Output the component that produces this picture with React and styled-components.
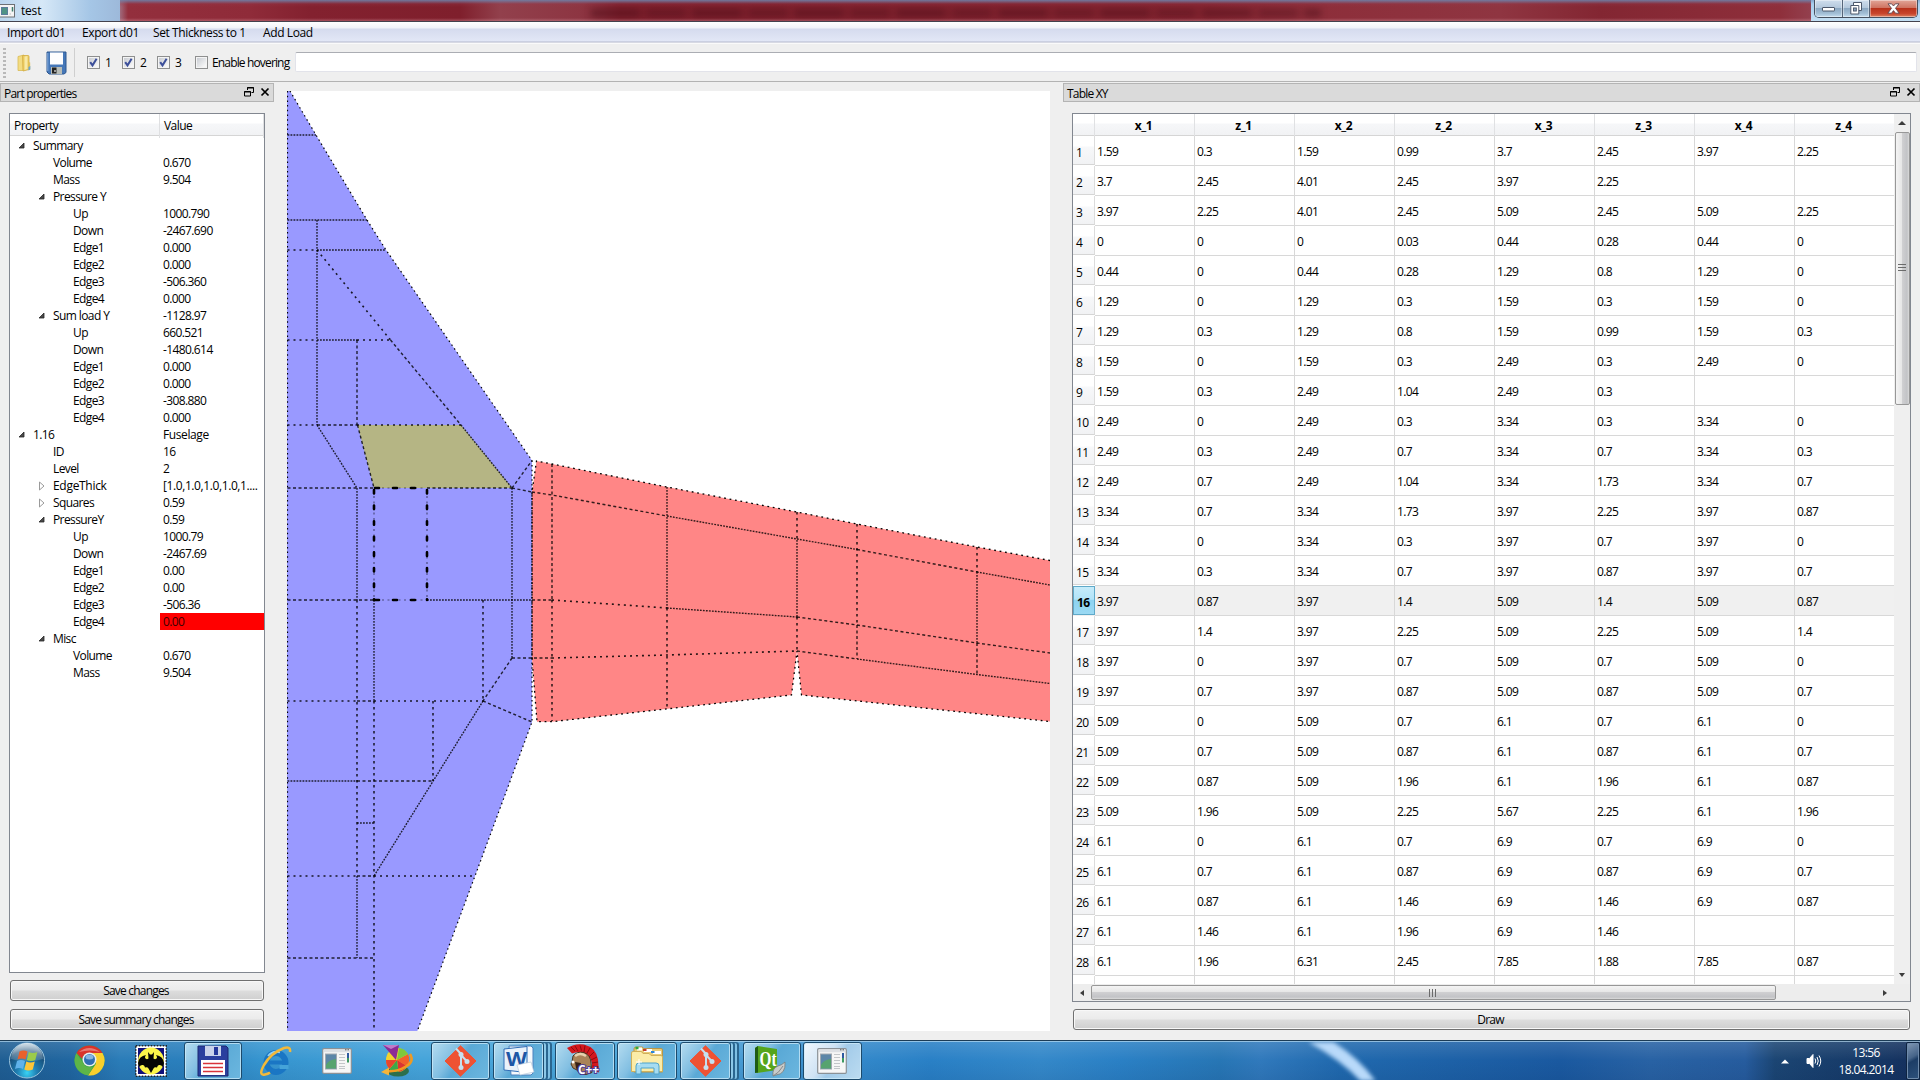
import React from "react";
import styled, { createGlobalStyle, css } from "styled-components";

const Global = createGlobalStyle`
  * { box-sizing: border-box; }
  html, body { margin: 0; padding: 0; overflow: hidden; }
  body { font-family: "Open Sans", "Noto Sans", sans-serif; font-size: 12px; letter-spacing: -0.6px; color: #000; background: #efefef; }
`;

const Window = styled.div`
  width: 1920px; height: 1080px; display: flex; flex-direction: column; background: #efefef; overflow: hidden;
  line-height: 17px; white-space: nowrap;
`;

/* ---------- title bar ---------- */
const TitleBar = styled.header`
  height: 22px; flex: none; display: flex; align-items: flex-start; overflow: hidden;
  background: linear-gradient(180deg, #86a9cf 0, #a9cdec 4px, #c3dff4 100%);
  border-bottom: 1px solid #44424e;
`;
const TitleLabel = styled.div`
  width: 120px; height: 21px; flex: none; display: flex; align-items: center; gap: 5px; letter-spacing: -0.2px;
  background: linear-gradient(90deg, #b9d5ee, #d6e8f7 35%, #a5c6e6 75%, #9db9da);
`;
const TitleGlass = styled.div`
  flex: 1; height: 21px; display: flex; align-items: center; justify-content: center;
  background:
    linear-gradient(180deg, rgba(110,130,170,.9) 0, rgba(150,60,80,.25) 4px, rgba(0,0,0,0) 7px, rgba(0,0,0,0) 18px, rgba(255,200,210,.28) 21px),
    linear-gradient(90deg, #a06a7c 0, #932f3d 8px, #8f2b39 130px, #83212f 190px, #7f1f2c 340px, #92404c 380px, #8d3542 460px, #7e1f2c 500px, #842430 1080px, #8d2e3a 1200px, #8f3541 1380px, #832632 1480px, #8e2f3b 1660px, #93404e 100%);
`;
const GlassBlur = styled.div`
  width: 730px; height: 8px; filter: blur(3px); margin-top: 4px; margin-right: 20px;
  background: repeating-linear-gradient(90deg, rgba(60,8,18,.38) 0 46px, rgba(60,8,18,.12) 50px 55px, rgba(60,8,18,.32) 58px 92px, rgba(60,8,18,.1) 96px 102px);
`;
const Controls = styled.div`
  width: 104px; height: 18px; margin: 0 2px 0 3px; flex: none; display: flex; overflow: hidden;
  border: 1px solid #46505f; border-top: 0; border-radius: 0 0 5px 5px;
`;
const ControlButton = styled.div`
  width: ${(p) => p.$w}px; display: flex; align-items: center; justify-content: center;
  border-right: ${(p) => (p.$close ? 0 : "1px solid #56667a")};
  box-shadow: inset 0 0 0 1px rgba(255,255,255,.4);
  background: ${(p) =>
    p.$close
      ? "linear-gradient(180deg, #e2a698 0, #cf7462 45%, #b8321b 50%, #c8452c 80%, #dc8262 100%)"
      : "linear-gradient(180deg, #cfdeed 0, #b4c8dc 45%, #8ca8c2 50%, #a3bfd6 80%, #c6def0 100%)"};
`;

/* ---------- menu and tool bars ---------- */
const MenuBar = styled.nav`
  height: 22px; flex: none; display: flex; padding-left: 7px; line-height: 22px; letter-spacing: -0.4px;
  background: linear-gradient(180deg, #ffffff 0, #f1f3f9 6px, #d5dbee 7px, #e2e7f6 19px, #b4b8cc 20px, #fafafa 21px);
`;
const MenuItem = styled.span`width: ${(p) => p.$w}px; flex: none;`;
const ToolBar = styled.div`
  height: 38px; flex: none; display: flex; align-items: center; padding: 0 3px 0 3px;
  border-bottom: 1px solid #b3b3b3; background: #efefef;
`;
const Grip = styled.div`
  width: 3px; height: 30px; margin-right: 11px;
  background: repeating-linear-gradient(180deg, #b9b9b9 0 2px, transparent 2px 4px);
`;
const ToolIcon = styled.div`width: ${(p) => p.$w}px; display: flex; margin-right: ${(p) => p.$gap}px;`;
const Separator = styled.div`width: 1px; height: 29px; background: #cfcfcf; margin-right: 12px;`;
const Check = styled.label`
  display: flex; align-items: center; width: ${(p) => p.$w}px; gap: ${(p) => p.$gap || 5}px; letter-spacing: -0.85px; line-height: 18px;
`;
const Box = styled.span`
  width: 13px; height: 13px; border: 1px solid #8e8f8f; display: flex; flex: none;
  background: linear-gradient(135deg, #c3c7ce, #f6f6f6 80%); box-shadow: inset 0 0 0 1px #f4f4f4;
`;
const Address = styled.div`
  flex: 1; height: 20px; margin-top: -1px; background: #fff; border: 1px solid #e2e3ea; border-top-color: #abadb3; border-radius: 2px;
`;

/* ---------- body ---------- */
const Body = styled.main`height: 958px; flex: none; display: flex; padding-top: 1px;`;
const Dock = styled.section`width: ${(p) => p.$w}px; flex: none; display: flex; flex-direction: column;`;
const DockTitle = styled.div`
  height: 19px; flex: none; display: flex; align-items: center; padding: 0 3px 0 3px;
  background: #dadada; border: 1px solid #b4b4b4;
`;
const DockName = styled.span`flex: 1; padding-top: 2px; letter-spacing: -0.8px;`;
const DockTools = styled.span`display: flex; gap: 6px; padding-bottom: 1px;`;
const Frame = styled.div`
  display: flex; flex-direction: column; background: #fff; border: 1px solid #828790; overflow: hidden;
  margin: 11px ${(p) => p.$r}px 0 9px; height: ${(p) => p.$h}px; flex: none;
`;
const PushButton = styled.div`
  height: 21px; flex: none; margin: ${(p) => p.$top}px 10px 0 10px; padding-right: ${(p) => p.$shift || 0}px;
  border: 1px solid #707070; border-radius: 3px; text-align: center; line-height: 20px; letter-spacing: -0.8px;
  box-shadow: inset 0 0 0 1px #f8f8f8;
  background: linear-gradient(180deg, #f2f2f2 0, #ebebeb 48%, #dddddd 52%, #cfcfcf 100%);
`;
const Canvas = styled.div`width: 763px; height: 940px; margin: 8px 13px 0 13px; flex: none; background: #fff; display: flex;`;

/* ---------- property tree ---------- */
const headFill = css`background: linear-gradient(180deg, #fff 0, #fff 9px, #f6f7f9 10px, #f1f2f4 100%);`;
const TreeHead = styled.div`
  display: grid; grid-template-columns: 150px 1fr; height: 22px; line-height: 24px; border-bottom: 1px solid #d5d5d5; margin-bottom: 1px; flex: none;
  letter-spacing: -0.55px;
  ${headFill}
`;
const TreeHeadCell = styled.div`padding-left: 4px; border-right: 1px solid #dfe0e2;`;
const TreeRow = styled.div`display: grid; grid-template-columns: 150px 1fr; height: 17px;`;
const TreeName = styled.div`
  display: flex; align-items: center; padding-left: ${(p) => 8 + p.$level * 20}px;
  letter-spacing: ${(p) => (p.$tight ? -0.3 : -0.6)}px;
`;
const Twist = styled.span`width: 15px; display: flex; flex: none;`;
const TreeValue = styled.div`padding-left: 3px; letter-spacing: ${(p) => (p.$wide ? -0.4 : -0.6)}px; background: ${(p) => (p.$alert ? "#ff0000" : "transparent")}; color: ${(p) => (p.$alert ? "#400000" : "#000")};`;

/* ---------- data table ---------- */
const TableTop = styled.div`display: flex; flex: 1; min-height: 0;`;
const Sheet = styled.div`flex: 1; overflow: hidden;`;
const cols = css`display: grid; grid-template-columns: 22px repeat(7, 100px) 99px;`;
const HeadRow = styled.div`${cols} height: 22px; border-bottom: 1px solid #d5d5d5; ${headFill}`;
const HeadCell = styled.div`
  border-right: 1px solid #e0e1e3; font-weight: 700; text-align: center; line-height: 24px; letter-spacing: -0.4px; padding-right: 2px;
  &:last-child { border-right: 0; }
`;
const Row = styled.div`
  ${cols} height: 30px; background: ${(p) => (p.$active ? "#f0f0f0" : "#fff")};
`;
const RowHead = styled.div`
  padding-left: 3px; line-height: 33px; border-right: 1px solid #dcdcdc; border-bottom: 1px solid #d5d5d5; margin-bottom: 1px; height: 29px;
  background: linear-gradient(180deg, #fff 0, #fff 10px, #f7f8fa 11px, #f1f2f4 100%);
  ${(p) => p.$active && css`
    font-weight: 700; border: 1px solid #5fa9c9; padding-left: 3px; line-height: 31px;
    background: linear-gradient(180deg, #c6ebfa 0, #b2e3f8 45%, #8dd3f1 50%, #9bd9f3 100%);
  `}
`;
const Cell = styled.div`
  height: 30px; padding-left: 2px; line-height: 31px; border-right: 1px solid #d8d8d8; border-bottom: 1px solid #d8d8d8;
  &:last-child { border-right: 0; }
`;
const VBar = styled.div`
  width: 16px; display: flex; flex-direction: column; align-items: center; background: #efefef; flex: none; padding-bottom: 5px;
`;
const HBar = styled.div`height: 17px; flex: none; display: flex; align-items: center; background: #ededed; padding-right: 16px; `;
const Arrow = styled.span`display: flex; align-items: center; justify-content: center; width: ${(p) => p.$w}px; height: ${(p) => p.$h}px; flex: none;`;
const Spring = styled.span`flex: 1;`;
const VThumb = styled.div`
  width: 15px; height: 273px; border: 1px solid #979797; border-radius: 2px; display: flex; align-items: center; justify-content: center;
  background: linear-gradient(90deg, #f4f4f4 0, #e6e6e6 45%, #cfcfd1 50%, #c2c3c6 85%, #dadada 100%);
`;
const HThumb = styled.div`
  height: 15px; width: 685px; border: 1px solid #979797; border-radius: 2px; display: flex; align-items: center; justify-content: center;
  background: linear-gradient(180deg, #f4f4f4 0, #e6e6e6 45%, #cfcfd1 50%, #c2c3c6 85%, #dadada 100%);
`;

/* ---------- task bar ---------- */
const TaskBar = styled.footer`
  height: 40px; flex: none; display: flex; align-items: center; overflow: hidden; padding-top: 1px;
  border-top: 1px solid #1c3c56; box-shadow: inset 0 1px 0 rgba(190,225,245,.65);
  background:
    linear-gradient(180deg, rgba(255,255,255,.12), rgba(255,255,255,0) 50%, rgba(0,20,60,.08)),
    linear-gradient(90deg, #1f5e93 0, #2066a0 70px, #2a7cb8 120px, #2a80be 200px, #3594cf 260px, #45a4da 420px, #4ba6da 640px, #4599d3 760px, #3288ca 860px, #2980c6 930px, #3488c9 1040px, #2a80c5 1120px, #2776b5 1220px, #3079bc 1260px, #2069ae 1340px, #1a59a0 1560px, #2862a4 1650px, #265c9e 1745px, #1b4573 1775px, #163a68 1860px, #142f5c 100%);
`;
const Slot = styled.div`
  width: ${(p) => p.$w}px; height: 38px; flex: none; display: flex; align-items: center; justify-content: center;
  padding: 0 ${(p) => p.$shift || 0}px 1px 0;
`;
const TaskButton = styled(Slot)`
  margin-right: ${(p) => p.$gap}px; border: 1px solid #1c4a6c; border-radius: 3px;
  box-shadow: inset 0 0 0 1px rgba(205,235,250,.75), ${(p) => (p.$stack ? "3px 0 0 -1px #8cc8e8, 4px 0 0 0 #2a6690, 7px 0 0 -1px #7fc0e4, 8px 0 0 0 #2a6690" : "0 0 0 0 transparent")};
  background: ${(p) =>
    p.$active
      ? "linear-gradient(125deg, #f2f8fd 0, #cfe3f4 40%, #a3cbe9 55%, #bcdcf1 100%)"
      : "linear-gradient(125deg, #b5dcf0 0, #82bfe2 35%, #5aa9d6 50%, #6cb7df 100%)"};
`;
const Streak = styled.svg`width: 110px; height: 39px; margin-left: 431px; flex: none; filter: blur(2px);`;
const Tray = styled.div`margin-left: auto; display: flex; align-items: center; height: 38px; color: #fff;`;
const TrayIcon = styled.span`display: flex; margin-right: ${(p) => p.$gap}px;`;
const Clock = styled.div`width: 62px; text-align: center; line-height: 17px; padding-right: 2px; margin-right: 8px;`;
const ShowDesktop = styled.div`
  width: 14px; height: 38px; border: 1px solid #0d2340; border-radius: 2px; box-shadow: inset 0 0 0 1px #6f8bab;
  background: linear-gradient(150deg, #8299b5 0, #466489 40%, #1c3d66 50%, #2e527c 100%);
`;

/* ---------- data ---------- */
const tree = [
  [0, "o", "Summary", ""], [1, "", "Volume", "0.670"], [1, "", "Mass", "9.504"], [1, "o", "Pressure Y", ""],
  [2, "", "Up", "1000.790"], [2, "", "Down", "-2467.690"], [2, "", "Edge1", "0.000"], [2, "", "Edge2", "0.000"],
  [2, "", "Edge3", "-506.360"], [2, "", "Edge4", "0.000"], [1, "o", "Sum load Y", "-1128.97"], [2, "", "Up", "660.521"],
  [2, "", "Down", "-1480.614"], [2, "", "Edge1", "0.000"], [2, "", "Edge2", "0.000"], [2, "", "Edge3", "-308.880"],
  [2, "", "Edge4", "0.000"], [0, "o", "1.16", "Fuselage"], [1, "", "ID", "16"], [1, "", "Level", "2"],
  [1, "c", "EdgeThick", "[1.0,1.0,1.0,1.0,1...."], [1, "c", "Squares", "0.59"], [1, "o", "PressureY", "0.59"],
  [2, "", "Up", "1000.79"], [2, "", "Down", "-2467.69"], [2, "", "Edge1", "0.00"], [2, "", "Edge2", "0.00"],
  [2, "", "Edge3", "-506.36"], [2, "", "Edge4", "0.00", true], [1, "o", "Misc", ""], [2, "", "Volume", "0.670"], [2, "", "Mass", "9.504"],
];
const heads = ["x_1", "z_1", "x_2", "z_2", "x_3", "z_3", "x_4", "z_4"];
const rows = `1.59 0.3 1.59 0.99 3.7 2.45 3.97 2.25
3.7 2.45 4.01 2.45 3.97 2.25 - -
3.97 2.25 4.01 2.45 5.09 2.45 5.09 2.25
0 0 0 0.03 0.44 0.28 0.44 0
0.44 0 0.44 0.28 1.29 0.8 1.29 0
1.29 0 1.29 0.3 1.59 0.3 1.59 0
1.29 0.3 1.29 0.8 1.59 0.99 1.59 0.3
1.59 0 1.59 0.3 2.49 0.3 2.49 0
1.59 0.3 2.49 1.04 2.49 0.3 - -
2.49 0 2.49 0.3 3.34 0.3 3.34 0
2.49 0.3 2.49 0.7 3.34 0.7 3.34 0.3
2.49 0.7 2.49 1.04 3.34 1.73 3.34 0.7
3.34 0.7 3.34 1.73 3.97 2.25 3.97 0.87
3.34 0 3.34 0.3 3.97 0.7 3.97 0
3.34 0.3 3.34 0.7 3.97 0.87 3.97 0.7
3.97 0.87 3.97 1.4 5.09 1.4 5.09 0.87
3.97 1.4 3.97 2.25 5.09 2.25 5.09 1.4
3.97 0 3.97 0.7 5.09 0.7 5.09 0
3.97 0.7 3.97 0.87 5.09 0.87 5.09 0.7
5.09 0 5.09 0.7 6.1 0.7 6.1 0
5.09 0.7 5.09 0.87 6.1 0.87 6.1 0.7
5.09 0.87 5.09 1.96 6.1 1.96 6.1 0.87
5.09 1.96 5.09 2.25 5.67 2.25 6.1 1.96
6.1 0 6.1 0.7 6.9 0.7 6.9 0
6.1 0.7 6.1 0.87 6.9 0.87 6.9 0.7
6.1 0.87 6.1 1.46 6.9 1.46 6.9 0.87
6.1 1.46 6.1 1.96 6.9 1.46 - -
6.1 1.96 6.31 2.45 7.85 1.88 7.85 0.87`
  .split("\n")
  .map((l) => l.split(" ").map((v) => (v === "-" ? "" : v)));

/* panel edges by dash density: s = sparse, v = sparse upright, m = medium, d = dense */
const edges = [
  ["d", "287.5,135 316,135"], ["d", "287.5,220 367,220"], ["s", "287.5,250 317,250"], ["d", "317,250 386,250"],
  ["s", "287.5,340 317,340"], ["d", "317,340 357,340"], ["s", "357,340 390,340"],
  ["s", "287.5,425 317,425"], ["m", "317,425 357,425"], ["s", "357,425 461,425"],
  ["m", "287.5,488 374,488"], ["m", "427,488 512,488"], ["m", "287.5,600 374,600"], ["d", "427,600 532,600"], ["m", "532,600 552,600"],
  ["m", "512,658 552,658"], ["s", "287.5,701 357,701"], ["m", "357,701 374,701"], ["s", "374,701 483,701"],
  ["d", "287.5,781 357,781"], ["m", "357,781 433,781"], ["d", "357,823 374,823"],
  ["s", "287.5,876 357,876"], ["m", "357,876 374,876"], ["s", "374,876 475,876"], ["m", "287.5,958 374,958"],
  ["d", "317,220 317,425"], ["m", "357,340 357,425"], ["d", "357,488 357,600"], ["v", "357,600 357,876"], ["d", "357,876 357,958"],
  ["d", "374,600 374,701"], ["v", "374,701 374,1031"], ["v", "483,600 483,701"], ["v", "433,701 433,781"],
  ["d", "512,488 512,658"], ["s", "317,250 390.5,340"], ["m", "390.5,340 461,425"], ["d", "461,425 512,488"],
  ["d", "317,425 357,488"], ["m", "357.5,425 374,488"], ["m", "512,488 532,460.5"], ["m", "512,488 532,492"],
  ["m", "512,658 483,701"], ["d", "483,701 374,876"], ["m", "483,701 532,722"],
  ["d", "532,492 532,658"],
  ["m", "532,492 552,495 667,516"], ["d", "667,516 797,539 857,549.5"], ["m", "857,549.5 977,572"], ["d", "977,572 1050,585"],
  ["s", "552,600 667,608"], ["d", "667,608 797,617"], ["m", "797,617 857,625 977,643 1050,653"],
  ["s", "552,658 667,655 797,651"], ["m", "797,651 857,659"], ["d", "857,659 977,674.5 1050,683.5"],
  ["m", "552,464 552,600"], ["v", "552,600 552,721"], ["d", "667,487 667,608"], ["v", "667,608 667,708"],
  ["v", "797,512 797,540"], ["d", "797,540 797,617"], ["v", "797,617 797,651"], ["v", "857,524 857,625"], ["m", "857,625 857,659"],
  ["v", "977,547 977,572"], ["d", "977,572 977,643"], ["m", "977,643 977,674"],
];
const dash = { s: "2 4", v: "2.5 3.5", m: "3 2.5", d: "1.8 1.2" };
const weight = { s: 1.6, v: 1.6, m: 1.4, d: 1.4 };
const ink = { s: 0.85, v: 0.8, m: 0.8, d: 0.8 };
const outline = "M287.5,91 V1031 M290,91 L316,135 L367,220 L386,250 L532,460.5 V722 L475,876 L417.3,1031";
const wing = "536.5,461 552,464 667,487 797,512 857,524 977,547 1050,560.5 1050,721.5 801.5,695 797,651 791.5,695 552,721.7 537,721.7 532,658 532,492";

function Mesh() {
  return (
    <svg width="763" height="940" viewBox="287 91 763 940">
      <path d="M287,91 H290 L316,135 L367,220 L386,250 L532,460.5 V722 L475,876 L417.3,1031 H287Z" fill="#9999ff" />
      <polygon points={wing} fill="#ff8686" />
      <polygon points="357.5,425 461,425 512,488 374,488" fill="#b5b584" />
      <g fill="none" stroke="#000">
        <path d={outline} strokeWidth="1.2" strokeDasharray="1.5 3.2" />
        <polyline points={"1050,560.5 977,547 857,524 797,512 667,487 552,464 536.5,461 532,492"} strokeWidth="1.3" strokeDasharray="1.8 3.7" />
        <polyline points={"532,658 537,721.7 552,721.7 791.5,695 797,651 801.5,695 1050,721.5"} strokeWidth="1.3" strokeDasharray="1.8 3.7" />
        {edges.map(([k, pts], i) => (
          <polyline key={i} points={pts} strokeWidth={weight[k]} strokeOpacity={ink[k]} strokeDasharray={dash[k]} />
        ))}
        <g strokeWidth="2.6" strokeLinecap="round">
          <path d="M374,490 V600 M427,490 V600" strokeDasharray="3.5 12.1" />
          <path d="M375,488 H424 M375,600 H424" strokeDasharray="4 14" />
        </g>
        <path d="M374,496 V600 M427,496 V600 M382,488 H424 M382,600 H424" strokeWidth="1.2" strokeOpacity=".5" strokeDasharray="2 3.5" />
      </g>
    </svg>
  );
}

/* ---------- small drawings ---------- */
const FloatClose = () => (
  <DockTools>
    <svg width="10" height="10" viewBox="0 0 10 10" fill="none" stroke="#000">
      <path d="M3.500 3V.5h6v5H7.500M3 1h7M.5 4.500h6v4.500h-6zM0 5h7" />
    </svg>
    <svg width="10" height="10" viewBox="0 0 10 10" stroke="#000" strokeWidth="1.7"><path d="M1.500 1.500l7 7M8.500 1.500l-7 7" /></svg>
  </DockTools>
);
const Tick = () => (
  <svg width="11" height="11" viewBox="0 0 11 11" fill="none" stroke="#3c4f9a" strokeWidth="2"><path d="M2.200 5.200l2.300 3.200L8.600 1.800" /></svg>
);
const AppWindow = ({ w = 30, h = 26 }) => (
  <svg width={w} height={h} viewBox="0 0 30 26">
    <rect x=".7" y=".7" width="28.6" height="24.6" rx="1" fill="#f6f6f6" stroke="#8b9196" strokeWidth="1.2" />
    <path d="M2 3h26" stroke="#dde0e4" strokeWidth="2.4" /><path d="M23 1.800h1.500M25.500 1.800H27" stroke="#555" />
    <rect x="3.500" y="6" width="11" height="15" fill="#5c86a8" stroke="#a0a8b0" /><path d="M4 17q2-5 10-6v9.500H4z" fill="#57a36f" />
    <path d="M17 6.500h6M17 9.500h6M17 12.500h6M17 15.500h6M17 18.500h6M17 20.500h6" stroke="#c3c6c9" />
    <path d="M26 5v5" stroke="#2e5aa0" strokeWidth="2" /><path d="M26 10v4.500" stroke="#3e9a62" strokeWidth="2" />
  </svg>
);
const TitleIcon = () => (
  <svg width="16" height="14" viewBox="0 0 16 14">
    <rect x="-1" y=".5" width="15.500" height="12.500" fill="#f4f4f4" stroke="#6c7075" /><rect x="1.500" y="3.500" width="6" height="7" fill="#4f9385" stroke="#5a7d9c" />
    <path d="M9.500 10h1.500" stroke="#bbb" /><path d="M12.500 3v4.500" stroke="#3d7d6c" strokeWidth="1.500" />
  </svg>
);
const Folder = () => (
  <svg width="15" height="18" viewBox="0 0 15 18">
    <path d="M1 2.500l6-1.500v15.500H1z" fill="#f3dc82" stroke="#d9bb55" strokeWidth=".8" />
    <path d="M5.500 1.500H11q1 0 1 1v13l-6 1.500z" fill="#eccb5e" stroke="#d3ad45" strokeWidth=".8" /><path d="M7.500 2.500l3-.5v13l-3 1z" fill="#f8e9a6" />
    <path d="M12.200 8l1 .5v7l-1.500.5z" fill="#e0c05c" /><path d="M11.500 13l1.800-1v3.500l-1.800 1z" fill="#6aa6cf" />
  </svg>
);
const Disk = () => (
  <svg width="21" height="24" viewBox="0 0 21 24">
    <path d="M1 1h19v20.500l-2 1.500H3l-2-2z" fill="#4577b8" stroke="#2f5890" /><rect x="4" y="1.500" width="13" height="12" fill="#fdfdfe" />
    <path d="M1.800 2v18" stroke="#86aede" /><rect x="5" y="16" width="11" height="7" fill="#b8bdb8" /><rect x="6" y="16.500" width="4.500" height="6" fill="#222" /><rect x="8" y="19" width="2" height="2" fill="#999" />
  </svg>
);
const StartOrb = () => (
  <svg width="38" height="37" viewBox="0 0 38 37">
    <defs>
      <radialGradient id="orb" cx=".5" cy=".85" r=".8"><stop offset="0" stopColor="#38d3f5" /><stop offset=".35" stopColor="#1f7fb3" /><stop offset=".8" stopColor="#174a74" /><stop offset="1" stopColor="#5f8aa8" /></radialGradient>
      <linearGradient id="gl" x2="0" y2="1"><stop stopColor="#fff" stopOpacity=".7" /><stop offset="1" stopColor="#fff" stopOpacity=".1" /></linearGradient>
    </defs>
    <circle cx="19" cy="18.500" r="17.500" fill="url(#orb)" stroke="#9cc5dd" strokeWidth="1" />
    <path d="M3 17a16 16 0 0 1 32 0q-16 5-32 0z" fill="url(#gl)" />
    <path d="M11.500 9.500q4-2 8 0l-2 8q-4-2-8 0z" fill="#e9602c" /><path d="M20.800 10q4 2 8.500 0l-2 8q-4.500 2-8.500 0z" fill="#9bcb4a" />
    <path d="M9 19q4-2 8 0l-2 8q-4-2-8 0z" fill="#5fb2ea" /><path d="M18.300 19.500q4 2 8.500 0l-2 8q-4.500 2-8.500 0z" fill="#fbc638" />
  </svg>
);
const Chrome = () => (
  <svg width="31" height="31" viewBox="0 0 31 31">
    <circle cx="15.500" cy="15.500" r="15" fill="#3aa346" /><path d="M2.500 8A15 15 0 0 1 28.500 8H15.500a7.500 7.500 0 0 0-7.300 6z" fill="#d8332a" />
    <path d="M28.500 8A15 15 0 0 1 14 30.400l7.500-11q2-6-3-11.400z" fill="#f8cf2c" /><path d="M2.500 8a15 15 0 0 0 11.500 22.400l5-8.500q-7 1.500-10-4z" fill="#5db548" />
    <circle cx="15.500" cy="14.500" r="7" fill="#e9eef0" /><circle cx="15.500" cy="14.500" r="5.500" fill="#2f6fb4" /><ellipse cx="15.500" cy="12" rx="4" ry="2.500" fill="#86b4e0" />
    <path d="M5 7q10-8 21 0-10-3-21 0z" fill="#fff" opacity=".35" />
  </svg>
);
const Bat = () => (
  <svg width="32" height="32" viewBox="0 0 32 32">
    <rect x="1" y="1" width="30" height="30" fill="#fff" /><rect x=".75" y=".75" width="30.500" height="30.500" fill="none" stroke="#222" strokeWidth="1.500" strokeDasharray="1.500 1.500" /><rect x="3" y="3" width="26" height="26" fill="#10107a" />
    <ellipse cx="16" cy="16" rx="13" ry="13.500" fill="#fbf54a" />
    <path d="M13 7L15 9.500h2L19 7l-.5 6.500Q20.500 15 22 13q0-2-1-3 7 1 8 8 0 2-1.500 4-1-2.500-3.500-2 -1.500 0-2 2.500-2.500-1-3.500 1L16 28l-2.500-4.500q-1-2-3.500-1-.5-2.500-2-2.500-2.500-.5-3.500 2Q3 20 3 18q1-7 8-8-1 1-1 3 1.500 2 3.500.5z" fill="#050505" />
  </svg>
);
const Floppy = () => (
  <svg width="32" height="32" viewBox="0 0 32 32">
    <path d="M1 1h28l2 2v28H1z" fill="#2a3f9e" stroke="#1a2870" /><rect x="8" y="1" width="16" height="10" fill="#c9d3ea" /><rect x="17" y="2" width="4" height="8" fill="#24389a" />
    <rect x="4" y="15" width="24" height="15" fill="#fff" /><path d="M6 18.500h20M6 22.500h20M6 26.500h20" stroke="#d8343a" strokeWidth="1.400" />
  </svg>
);
const Explorer = () => (
  <svg width="33" height="32" viewBox="0 0 33 32">
    <circle cx="17" cy="17.500" r="9.500" fill="none" stroke="#1a76c4" strokeWidth="6" /><path d="M9 17.500h18" stroke="#1a76c4" strokeWidth="4" /><path d="M20.500 20h9v4h-9z" fill="#45a3d9" />
    <path d="M9 11q5-6 12-3.500" stroke="#8fd0f5" strokeWidth="1.800" fill="none" />
    <path d="M31 7q1-6-6-4Q12 8 5 20-1 31 6 29.500 9 29 11 27.500" fill="none" stroke="#f2b93a" strokeWidth="2.500" />
  </svg>
);
const Pinwheel = () => (
  <svg width="33" height="32" viewBox="0 0 33 32">
    <ellipse cx="17" cy="26" rx="11" ry="5.500" fill="#2c6f4c" />
    <ellipse cx="16.500" cy="15" rx="11.500" ry="12" fill="#f2d22e" /><path d="M16 15L27 9a12 12 0 0 1-1 12z" fill="#f0602c" /><path d="M16 15l10 6a12 12 0 0 1-8.500 6z" fill="#d93434" /><path d="M16 15l1.500 12a12 12 0 0 1-9-3z" fill="#3aa84a" /><path d="M16 15l-7.500 9a12 12 0 0 1-3.500-9z" fill="#e8452e" />
    <path d="M16 15l2-12a12 12 0 0 1 9 6z" fill="#7ec83c" /><path d="M2 0h16l-3 15z" fill="#8b2a96" /><path d="M2 0h16l-8 4z" fill="#c07bc8" />
    <path d="M29 9q5 8-5 13-8 5-18 4" fill="none" stroke="#f09a22" strokeWidth="2.500" /><path d="M0 27l8-4.500v8z" fill="#f4b53a" />
  </svg>
);
const Git = () => (
  <svg width="33" height="32" viewBox="0 0 33 32">
    <path d="M16.500.8L32 16 16.500 31.200 1 16z" fill="#ee5233" strokeLinejoin="round" stroke="#ee5233" />
    <path d="M12 3.500l5 5.500v13M17 10l6 6.500" fill="none" stroke="#c5e0ef" strokeWidth="2" /><circle cx="17" cy="9.500" r="2.500" fill="#c5e0ef" /><circle cx="23" cy="16.500" r="2.500" fill="#c5e0ef" /><circle cx="17" cy="22.500" r="2.500" fill="#c5e0ef" />
  </svg>
);
const IconText = styled.text`
  font-family: ${(p) => (p.$serif ? '"Liberation Serif", serif' : '"Open Sans", sans-serif')}; font-weight: 700; font-size: ${(p) => p.$s}px;
  letter-spacing: 0;
`;
const Word = () => (
  <svg width="32" height="31" viewBox="0 0 32 31">
    <path d="M6 1h22l2 2v25l-2 2H8z" fill="#f5f8fc" stroke="#4d82bf" /><path d="M1 4L24 1.500v26L1 25z" fill="#e9f1fa" stroke="#2e6cb5" />
    <IconText x="3" y="21" $s={20} fill="#1d56a5" textLength="21" lengthAdjust="spacingAndGlyphs">W</IconText>
    <path d="M14 20l14-3 3 10-14 3z" fill="#fff" stroke="#b8c8da" strokeWidth=".7" />
  </svg>
);
/* plume drawn as a fan of feathers round the back of the helmet */
const Trojan = () => (
  <svg width="38" height="36" viewBox="0 0 38 36">
    <path d="M1 5Q9 0 18 1.500q12 3 14 15l1 13-7-3q1-11-5-15-6-4-15-1z" fill="#d3171d" />
    <path d="M5 4l4 4M9 3l3 5M14 2.500l1.500 5M19 2.500l-1 6.500M24 5l-3.500 6M28 9l-5 5M31 14l-6 3M32 19l-6 1M32.500 24l-6-1" stroke="#8a0a10" />
    <path d="M7 13q4-5 11-3.500 7 3 7 11l1 9q-6 3-12 2L11 27l-4-2-2-4 1-2z" fill="#a98359" stroke="#4c3321" /><path d="M9 13q5-4 11 0" stroke="#e6d2b0" strokeWidth="2.500" fill="none" /><path d="M9 19l6 1-1 5-1 5-3-5z" fill="#372015" /><circle cx="7" cy="19" r="1.500" fill="#fff" />
    <IconText x="12" y="31" $s={12} fill="#fff" stroke="#4b3c9a" strokeWidth="2" paintOrder="stroke" textLength="21" lengthAdjust="spacingAndGlyphs">C++</IconText>
  </svg>
);
const Files = () => (
  <svg width="34" height="32" viewBox="0 0 34 32">
    <path d="M4 4q0-2 2-2h6q1 0 1.500 1.500H31q1.500 0 1.500 1.500v22H4z" fill="#e8cd78" stroke="#b6954a" /><path d="M7 2.500h5v3H7zM14 4h8v3h-8zM23 6h8v3h-8z" fill="#fff" />
    <path d="M5.500 3h3" stroke="#2faa3c" strokeWidth="2.500" /><path d="M13 5h3.500" stroke="#c63b2c" strokeWidth="2" /><path d="M21 7h3.500" stroke="#2b86d8" strokeWidth="2" />
    <path d="M1.500 8q0-1.500 1.500-1.500h8q1 0 2 2h6l2 2H31q1.500 0 1.500 1.500v14.500h-31z" fill="#fbeca8" stroke="#d0b05a" />
    <path d="M6 29V21q0-3 3-3h17q3 0 3 3v8h-5v-6H11v6z" fill="#a5dcf2" stroke="#4ea3cb" /><path d="M9 14v6M6 17h6" stroke="#fff" />
  </svg>
);
const QtLogo = () => (
  <svg width="32" height="32" viewBox="0 0 32 32">
    <path d="M1 3l3-2 19 3v21L3 28l-2-1z" fill="#55a51c" /><path d="M1 3l3-2v26.500L1 28z" fill="#1f5c14" />
    <IconText $serif x="5.500" y="21" $s={21} fill="#fff" textLength="17" lengthAdjust="spacingAndGlyphs">Qt</IconText>
    <path d="M31 17q1 12-9 13l-3 1q-1-8 5-10 4-1 7-4z" fill="#c9cccb" stroke="#787c7b" strokeWidth=".8" /><path d="M19 31q6-3 10-10" stroke="#888" fill="none" />
  </svg>
);
const Tri = ({ d, c = "#3c3c3c", w = 8, h = 8 }) => (
  <svg width={w} height={h} viewBox={`0 0 ${w} ${h}`}><path d={d} fill={c} /></svg>
);
const Expander = ({ kind }) => (
  <Twist>
    {kind === "o" && <svg width="8" height="8" viewBox="0 0 8 8"><path d="M6 1v5H1z" fill="#4a4a4a" stroke="#262626" strokeWidth=".8" /></svg>}
    {kind === "c" && <svg width="8" height="10" viewBox="0 0 8 10"><path d="M1.500 1l4.500 4-4.500 4z" fill="#fff" stroke="#9a9a9a" /></svg>}
  </Twist>
);

export default function App() {
  return (
    <Window>
      <Global />
      <TitleBar>
        <TitleLabel><TitleIcon />test</TitleLabel>
        <TitleGlass><GlassBlur /></TitleGlass>
        <Controls>
          <ControlButton $w={28}><svg width="13" height="6"><rect x=".5" y="1.500" width="12" height="3.500" rx=".5" fill="#fff" stroke="#4d586b" /></svg></ControlButton>
          <ControlButton $w={27}>
            <svg width="13" height="13" viewBox="0 0 13 13" fill="#fff" stroke="#4d586b"><path d="M3.500.5h8v8h-8z" /><path d="M.8 3.500h8v8.500h-8z" /><rect x="3.500" y="6" width="2.800" height="3" fill="#8fa9c4" /></svg>
          </ControlButton>
          <ControlButton $w={47} $close>
            <svg width="13" height="11" viewBox="0 0 13 11"><path d="M1 .8h3.600L6.500 3 8.400.8H12L8.500 5.300l3.700 4.900H8.500l-2-2.600-2 2.600H.8l3.700-4.900z" fill="#fff" stroke="#5f4650" strokeWidth=".9" /></svg>
          </ControlButton>
        </Controls>
      </TitleBar>
      <MenuBar>
        <MenuItem $w={75}>Import d01</MenuItem><MenuItem $w={71}>Export d01</MenuItem><MenuItem $w={110}>Set Thickness to 1</MenuItem><MenuItem $w={80}>Add Load</MenuItem>
      </MenuBar>
      <ToolBar>
        <Grip />
        <ToolIcon $w={15} $gap={14}><Folder /></ToolIcon>
        <ToolIcon $w={21} $gap={7}><Disk /></ToolIcon>
        <Separator />
        <Check $w={35}><Box><Tick /></Box>1</Check>
        <Check $w={35}><Box><Tick /></Box>2</Check>
        <Check $w={38}><Box><Tick /></Box>3</Check>
        <Check $w={100} $gap={4}><Box />Enable hovering</Check>
        <Address />
      </ToolBar>
      <Body>
        <Dock $w={274}>
          <DockTitle><DockName>Part properties</DockName><FloatClose /></DockTitle>
          <Frame $r={9} $h={860}>
            <TreeHead><TreeHeadCell>Property</TreeHeadCell><TreeHeadCell>Value</TreeHeadCell></TreeHead>
            {tree.map(([level, kind, name, value, alert], i) => (
              <TreeRow key={i}>
                <TreeName $level={level} $tight={name === "EdgeThick"}><Expander kind={kind} />{name}</TreeName>
                <TreeValue $alert={alert} $wide={/[\[F]/.test(value)}>{value}</TreeValue>
              </TreeRow>
            ))}
          </Frame>
          <PushButton $top={7} $shift={2}>Save changes</PushButton>
          <PushButton $top={8} $shift={2}>Save summary changes</PushButton>
        </Dock>
        <Canvas><Mesh /></Canvas>
        <Dock $w={857}>
          <DockTitle><DockName>Table XY</DockName><FloatClose /></DockTitle>
          <Frame $r={9} $h={889}>
            <TableTop>
              <Sheet>
                <HeadRow><HeadCell />{heads.map((h) => <HeadCell key={h}>{h}</HeadCell>)}</HeadRow>
                {rows.map((r, i) => (
                  <Row key={i} $active={i === 15}>
                    <RowHead $active={i === 15}>{i + 1}</RowHead>
                    {r.map((v, j) => <Cell key={j}>{v}</Cell>)}
                  </Row>
                ))}
                <Row><RowHead />{heads.map((h) => <Cell key={h} />)}</Row>
              </Sheet>
              <VBar>
                <Arrow $w={16} $h={18}><Tri d="M0 6L4 2l4 4z" /></Arrow>
                <VThumb><svg width="8" height="9" viewBox="0 0 8 9"><path d="M0 .5h8M0 3.500h8M0 6.500h8" stroke="#6b6b6b" /></svg></VThumb>
                <Spring />
                <Arrow $w={16} $h={8}><Tri d="M1 2h6L4 6z" /></Arrow>
              </VBar>
            </TableTop>
            <HBar>
              <Arrow $w={18} $h={15}><Tri d="M6 1v6L2 4z" /></Arrow>
              <HThumb><svg width="9" height="8" viewBox="0 0 9 8"><path d="M.5 0v8M3.500 0v8M6.500 0v8" stroke="#6b6b6b" /></svg></HThumb>
              <Spring />
              <Arrow $w={18} $h={15}><Tri d="M2 1v6l4-3z" /></Arrow>
            </HBar>
          </Frame>
          <PushButton $top={7} $shift={2}>Draw</PushButton>
        </Dock>
      </Body>
      <TaskBar>
        <Slot $w={55} $shift={1}><StartOrb /></Slot>
        <Slot $w={68}><Chrome /></Slot>
        <Slot $w={61} $shift={5}><Bat /></Slot>
        <TaskButton $w={58} $gap={0}><Floppy /></TaskButton>
        <Slot $w={67}><Explorer /></Slot>
        <Slot $w={55}><AppWindow /></Slot>
        <Slot $w={67}><Pinwheel /></Slot>
        <TaskButton $w={59} $gap={3}><Git /></TaskButton>
        <TaskButton $w={51} $gap={11} $stack><Word /></TaskButton>
        <TaskButton $w={60} $gap={2}><Trojan /></TaskButton>
        <TaskButton $w={60} $gap={3}><Files /></TaskButton>
        <TaskButton $w={51} $gap={12} $stack><Git /></TaskButton>
        <TaskButton $w={58} $gap={2} $shift={4}><QtLogo /></TaskButton>
        <TaskButton $w={59} $gap={0} $active $shift={2}><AppWindow /></TaskButton>
        <Streak viewBox="0 0 110 39"><path d="M8 -4H34Q68 16 86 44H72Q50 18 8 -4Z" fill="#b9dafa" /></Streak>
        <Tray>
          <TrayIcon $gap={17}><Tri w={8} h={5} c="#fff" d="M0 4.500L4 .5l4 4z" /></TrayIcon>
          <TrayIcon $gap={14}>
            <svg width="16" height="16" viewBox="0 0 16 16" fill="none" stroke="#fff"><path d="M1 5.500h2.500L7 1.500v13l-3.500-4H1z" fill="#fff" /><path d="M9 5.500q1.500 2.500 0 5M11 4q2.500 4 0 8M13 2.500q3.500 5.500 0 11" /></svg>
          </TrayIcon>
          <Clock>13:56<br />18.04.2014</Clock>
          <ShowDesktop />
        </Tray>
      </TaskBar>
    </Window>
  );
}
